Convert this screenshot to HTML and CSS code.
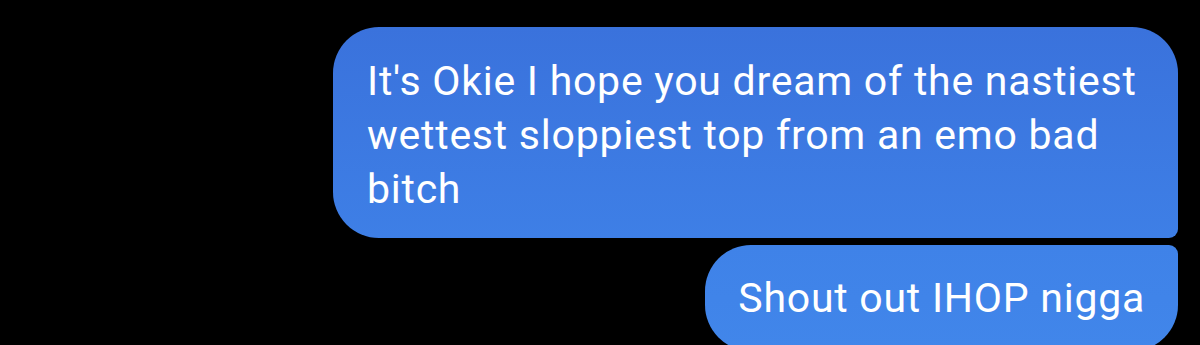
FILE: index.html
```html
<!DOCTYPE html>
<html>
<head>
<meta charset="utf-8">
<link rel="stylesheet" href="styles.css">
</head>
<body>
<div class="thread">
  <div class="bubble first">It's Okie I hope you dream of the nastiest wettest sloppiest top from an emo bad bitch</div>
  <div class="bubble last">Shout out IHOP nigga</div>
</div>
</body>
</html>
```
FILE: styles.css
```css
html, body {
  margin: 0;
  padding: 0;
  background: #000;
  height: 345px;
  overflow: hidden;
}
.thread {
  display: flex;
  flex-direction: column;
  align-items: flex-end;
  gap: 7px;
  padding: 27px 22px 0 0;
}
.bubble {
  box-sizing: border-box;
  color: #fff;
  font-family: Roboto, "Noto Sans", sans-serif;
  font-size: 41px;
  letter-spacing: 0.75px;
  line-height: 54px;
  background: linear-gradient(180deg, #3a72dc 0%, #3e7fe6 100%);
}
.first {
  width: 845px;
  padding: 27px 34px 22px 34px;
  border-radius: 46px 46px 9px 46px;
}
.last {
  padding: 26px 33px 26px 33px;
  border-radius: 46px 9px 46px 46px;
  background: linear-gradient(180deg, #3f82e8 0%, #4186ea 100%);
}
```
